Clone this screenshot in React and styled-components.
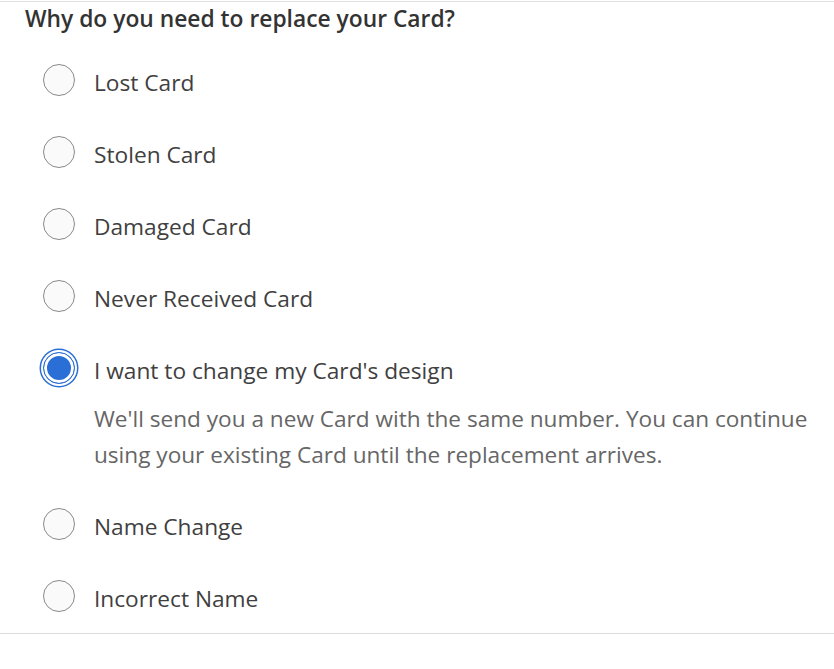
import React, { useState } from 'react';
import styled, { createGlobalStyle, css } from 'styled-components';

const GlobalStyle = createGlobalStyle`
  html, body {
    margin: 0;
    padding: 0;
    background: #fff;
  }
  body {
    font-family: "Open Sans", "Noto Sans", sans-serif;
    color: #333;
  }
`;

const Page = styled.div`
  width: 834px;
  height: 669px;
  padding-top: 1px;
  box-sizing: border-box;
`;

const Fieldset = styled.fieldset`
  margin: 0;
  padding: 0 0 1px;
  border: none;
  border-top: 1px solid #e2e2e2;
  border-bottom: 1px solid #dcdcdc;
`;

const Legend = styled.legend`
  display: block;
  float: left;
  width: 100%;
  padding: 0 0 0 25px;
  box-sizing: border-box;
  font-size: 22.8px;
  font-weight: 600;
  color: #333;
  line-height: 34px;
`;

const OptionList = styled.div`
  clear: both;
  display: flex;
  flex-direction: column;
  padding: 8px 0 0 43px;
`;

const Option = styled.label`
  display: block;
  padding: 20px 0;
  cursor: pointer;
`;

const Row = styled.div`
  display: flex;
  align-items: center;
  gap: 19px;
  height: 32px;
`;

const Radio = styled.span`
  flex: none;
  width: 32px;
  height: 32px;
  box-sizing: border-box;
  border-radius: 50%;
  border: 1px solid #8a8a8a;
  background: #fafafa;
  ${(p) =>
    p.checked &&
    css`
      border: 1.5px solid #2a6fd5;
      background: #2a6fd5;
      box-shadow: inset 0 0 0 3px #fff, 0 0 0 2px #fff, 0 0 0 3.5px #2a6fd5;
    `}
`;

const Label = styled.span`
  font-size: 22.7px;
  color: #404040;
  line-height: 32px;
  padding-top: 6px;
  white-space: nowrap;
`;

const Hint = styled.p`
  margin: 17px 0 -5px 51px;
  font-size: 22.6px;
  line-height: 36px;
  color: #666;
  max-width: 740px;
`;

const options = [
  'Lost Card',
  'Stolen Card',
  'Damaged Card',
  'Never Received Card',
  "I want to change my Card's design",
  'Name Change',
  'Incorrect Name',
];

export default function App() {
  const [value, setValue] = useState(4);
  return (
    <Page>
      <GlobalStyle />
      <Fieldset>
        <Legend>Why do you need to replace your Card?</Legend>
        <OptionList>
          {options.map((text, i) => (
            <Option key={text} onClick={() => setValue(i)}>
              <Row>
                <Radio checked={value === i} />
                <Label>{text}</Label>
              </Row>
              {value === i && i === 4 && (
                <Hint>
                  We'll send you a new Card with the same number. You can continue
                  using your existing Card until the replacement arrives.
                </Hint>
              )}
            </Option>
          ))}
        </OptionList>
      </Fieldset>
    </Page>
  );
}
